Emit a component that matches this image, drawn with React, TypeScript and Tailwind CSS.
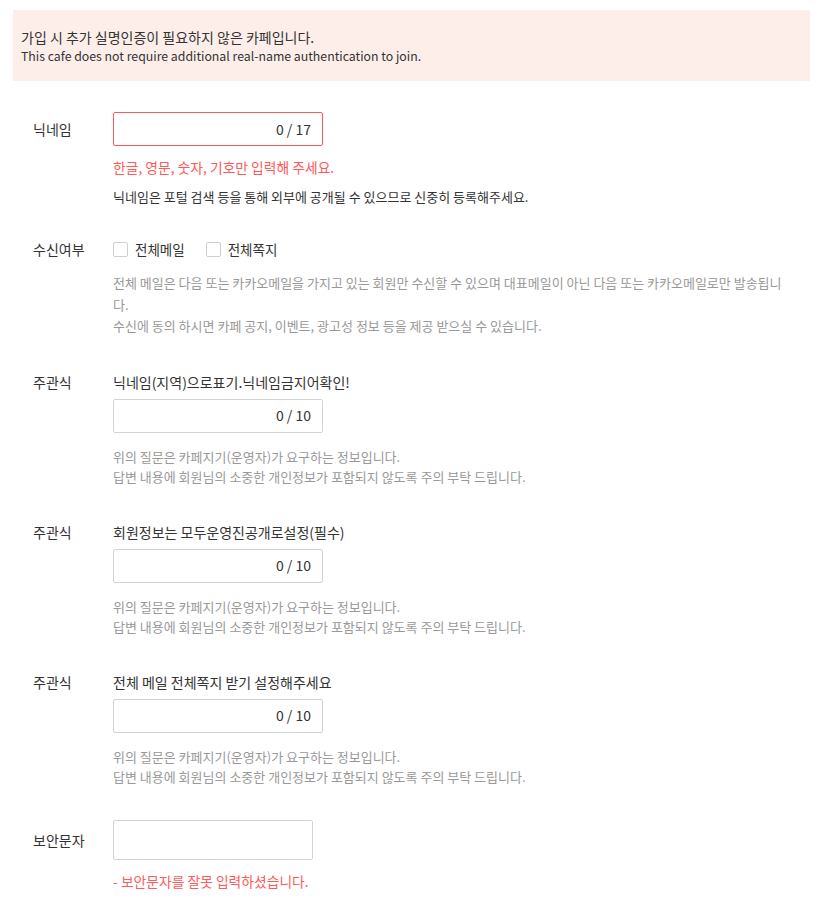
import React from 'react';

type RowProps = {
  label: string;
  labelClass?: string;
  children: React.ReactNode;
  className?: string;
};

const Row = (props: RowProps) => {
  return (
    <div className={`flex ${props.className ?? ''}`}>
      <div className={`w-[80px] shrink-0 text-[14px] text-[#333] ${props.labelClass ?? 'leading-[20px]'}`}>
        {props.label}
      </div>
      <div className="min-w-0 flex-1">{props.children}</div>
    </div>
  );
};

const CountInput = ({ count, error }: { count: string; error?: boolean }) => {
  return (
    <div
      className={`flex h-[34px] w-[210px] items-center justify-end rounded-[2px] border bg-white pr-[11px] text-[14px] text-[#333] ${
        error ? 'border-[#ff5a5a]' : 'border-[#d3d3d3]'
      }`}
    >
      {count}
    </div>
  );
};

const Check = ({ label }: { label: string }) => {
  return (
    <label className="flex items-center">
      <span className="h-[15px] w-[15px] rounded-[2px] border border-[#cfcfcf] bg-white" />
      <span className="ml-[7px] text-[13.5px] text-[#333]">{label}</span>
    </label>
  );
};

const Question = ({ title }: { title: string }) => {
  return (
    <Row label="주관식" className="mt-[35px]">
      <div className="text-[14px] leading-[20px] text-[#333]">{title}</div>
      <div className="mt-[7px]">
        <CountInput count="0 / 10" />
      </div>
      <div className="mt-[14px] text-[13px] leading-[20px] text-[#999]">
        <p>위의 질문은 카페지기(운영자)가 요구하는 정보입니다.</p>
        <p>답변 내용에 회원님의 소중한 개인정보가 포함되지 않도록 주의 부탁 드립니다.</p>
      </div>
    </Row>
  );
};

export default function App() {
  return (
    <div className="min-h-[900px] w-[830px] bg-white pb-[10px] font-['Noto_Sans_CJK_KR','Noto_Sans',sans-serif]">
      <div className="ml-[13px] mr-[20px] pt-[10px]">
        <div className="bg-[#fdeeea] px-2 pt-[17px] pb-[16px] text-[#333]">
          <p className="text-[14px] leading-[20px]">가입 시 추가 실명인증이 필요하지 않은 카페입니다.</p>
          <p className="text-[12.3px] leading-[18px]">
            This cafe does not require additional real-name authentication to join.
          </p>
        </div>
      </div>

      <div className="pl-[33px] pr-[40px]">
        <Row label="닉네임" labelClass="leading-[34px]" className="mt-[31px]">
          <CountInput count="0 / 17" error />
          <p className="mt-[11px] text-[13.8px] leading-[20px] text-[#ff5a5a]">
            한글, 영문, 숫자, 기호만 입력해 주세요.
          </p>
          <p className="mt-[10px] text-[13px] leading-[20px] text-[#333]">
            닉네임은 포털 검색 등을 통해 외부에 공개될 수 있으므로 신중히 등록해주세요.
          </p>
        </Row>

        <Row label="수신여부" className="mt-[32px]">
          <div className="flex h-[20px] items-center gap-[21px]">
            <Check label="전체메일" />
            <Check label="전체쪽지" />
          </div>
          <div className="mt-[13px] text-[13px] leading-[21.5px] text-[#999]">
            <p>
              전체 메일은 다음 또는 카카오메일을 가지고 있는 회원만 수신할 수 있으며 대표메일이 아닌 다음 또는
              카카오메일로만 발송됩니다.
            </p>
            <p>수신에 동의 하시면 카페 공지, 이벤트, 광고성 정보 등을 제공 받으실 수 있습니다.</p>
          </div>
        </Row>

        <Question title="닉네임(지역)으로표기.닉네임금지어확인!" />
        <Question title="회원정보는 모두운영진공개로설정(필수)" />
        <Question title="전체 메일 전체쪽지 받기 설정해주세요" />

        <Row label="보안문자" labelClass="leading-[40px]" className="mt-[33px]">
          <div className="h-[40px] w-[200px] rounded-[2px] border border-[#d3d3d3] bg-white" />
          <p className="mt-[11px] text-[13.8px] leading-[20px] text-[#ff5a5a]">- 보안문자를 잘못 입력하셨습니다.</p>
        </Row>
      </div>
    </div>
  );
}
